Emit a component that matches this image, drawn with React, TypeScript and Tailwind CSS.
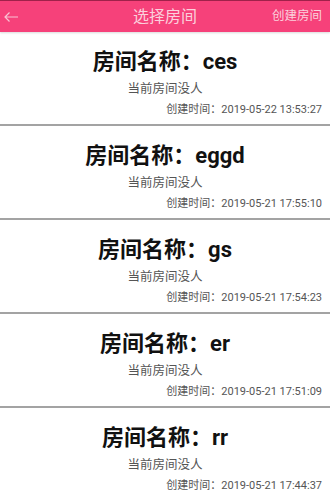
import React from "react";

type Room = { name: string; time: string };

const rooms: Room[] = [
    { name: "ces", time: "2019-05-22 13:53:27" },
    { name: "eggd", time: "2019-05-21 17:55:10" },
    { name: "gs", time: "2019-05-21 17:54:23" },
    { name: "er", time: "2019-05-21 17:51:09" },
    { name: "rr", time: "2019-05-21 17:44:37" },
];

const font = { fontFamily: '"Roboto", "Noto Sans CJK SC", sans-serif' };

const RoomCard = ({ room }: { room: Room }) => (
    <div className="flex flex-col border-b-2 border-[#a3a3a3] bg-white pt-[16px] pb-[6px]">
        <h2 className="text-center text-[22px] leading-[28px] font-bold text-[#111]">房间名称：{room.name}</h2>
        <p className="mt-[4px] text-center text-[12.5px] leading-[18px] text-[#555]">当前房间没人</p>
        <p className="mt-[4px] pr-[8px] text-right text-[11px] leading-[16px] text-[#555]">创建时间：{room.time}</p>
    </div>
);

export default function App() {
    return (
        <div className="h-[490px] w-[330px] overflow-hidden bg-white" style={font}>
            <header className="relative flex h-[32px] items-center border-t border-[#a0214a] bg-[#f6417a] shadow-[0_1px_2px_rgba(0,0,0,0.15)]">
                <svg width="18" height="12" viewBox="0 0 18 12" className="ml-[2px]" fill="none">
                    <path d="M16 6H3M7.5 1.5L3 6l4.5 4.5" stroke="#f8c3d3" strokeWidth="1.2" />
                </svg>
                <span className="absolute left-1/2 -translate-x-1/2 text-[16px] text-[#fbd0dc]">选择房间</span>
                <span className="ml-auto pr-[8px] text-[12.5px] text-[#fbd0dc]">创建房间</span>
            </header>
            {rooms.map((r) => (
                <RoomCard key={r.name} room={r} />
            ))}
        </div>
    );
}
